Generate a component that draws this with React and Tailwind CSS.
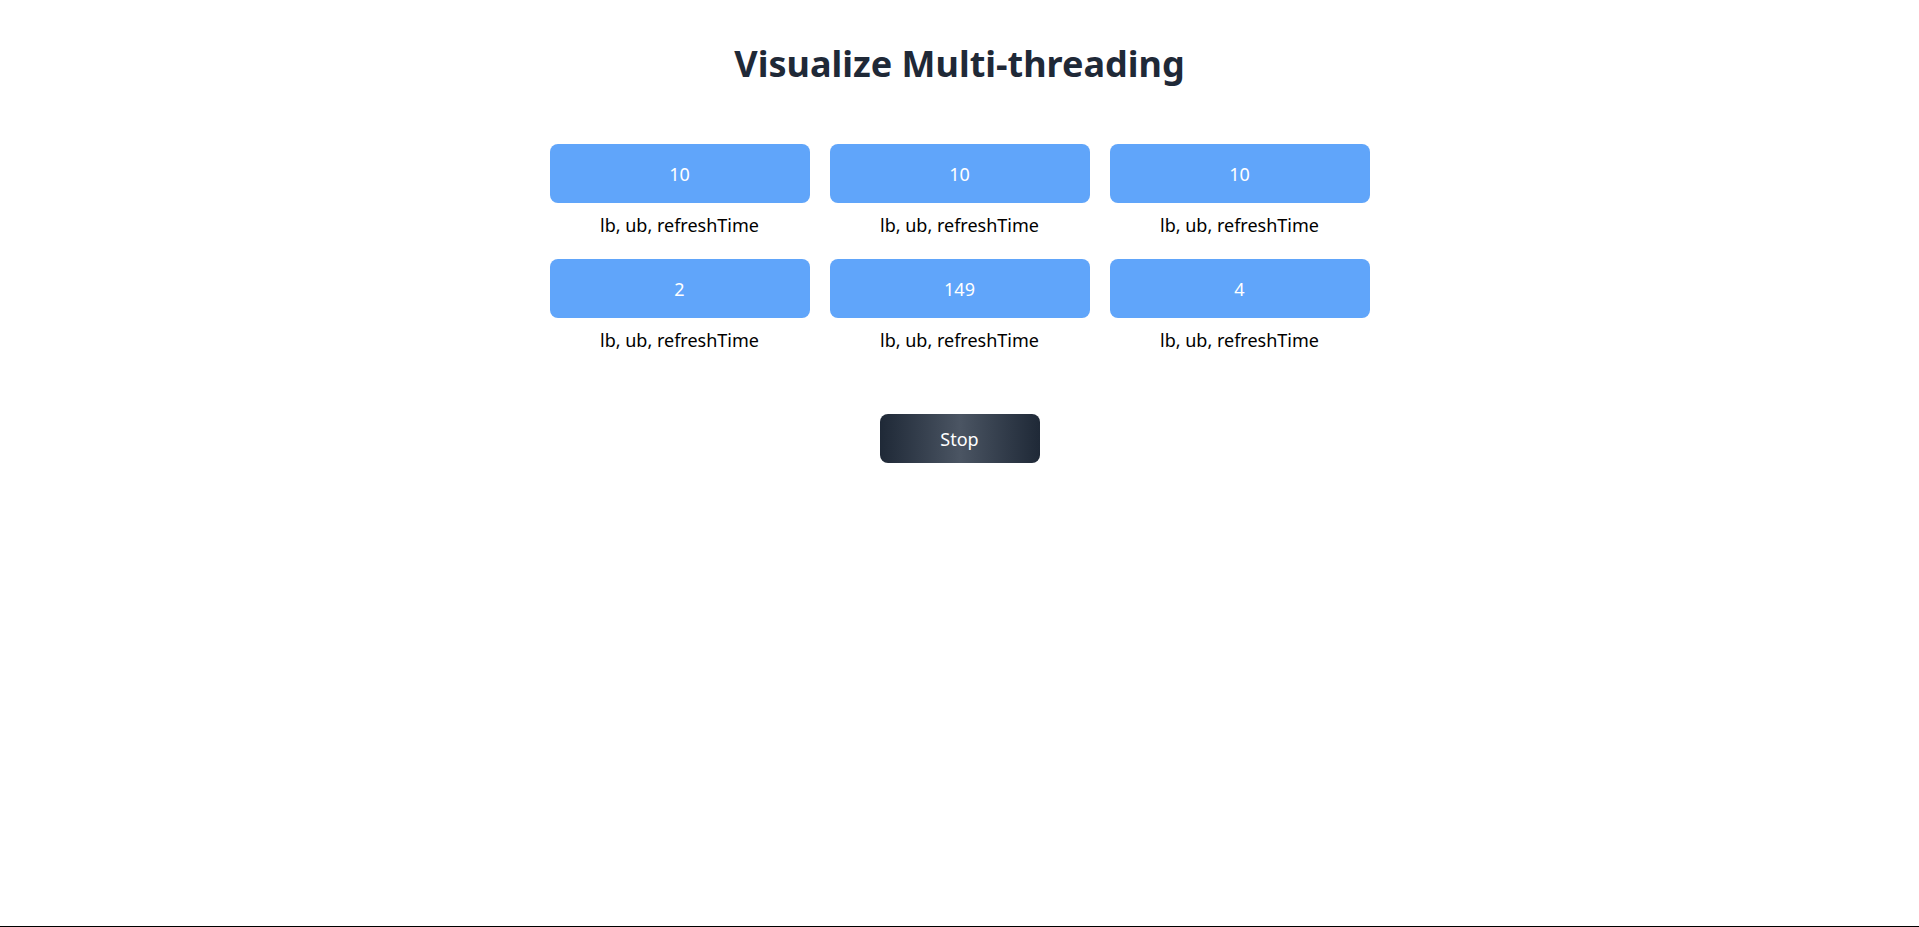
const THREADS = [
  { value: 10 },
  { value: 10 },
  { value: 10 },
  { value: 2 },
  { value: 149 },
  { value: 4 },
]

function ThreadBox({ value }) {
  return (
    <div className="flex flex-col items-center">
      <div className="flex h-[59px] w-full items-center justify-center rounded-lg bg-[#60a5fa] text-lg text-white">
        {value}
      </div>
      <p className="mt-2 text-lg leading-7 text-black">lb, ub, refreshTime</p>
    </div>
  )
}

export default function App() {
  return (
    <div
      className="flex h-screen flex-col items-center border-b border-black bg-white"
      style={{ fontFamily: '"Noto Sans", "Open Sans", sans-serif' }}
    >
      <h1 className="mt-10 text-4xl font-bold leading-[48px] text-[#1f2937]">
        Visualize Multi-threading
      </h1>

      <div className="mt-14 grid w-[820px] grid-cols-3 gap-x-5 gap-y-5">
        {THREADS.map((t, i) => (
          <ThreadBox key={i} value={t.value} />
        ))}
      </div>

      <button className="mt-[60px] h-[49px] w-[160px] rounded-lg bg-gradient-to-r from-[#1f2937] via-[#4b5563] to-[#1f2937] text-lg text-white">
        Stop
      </button>
    </div>
  )
}
